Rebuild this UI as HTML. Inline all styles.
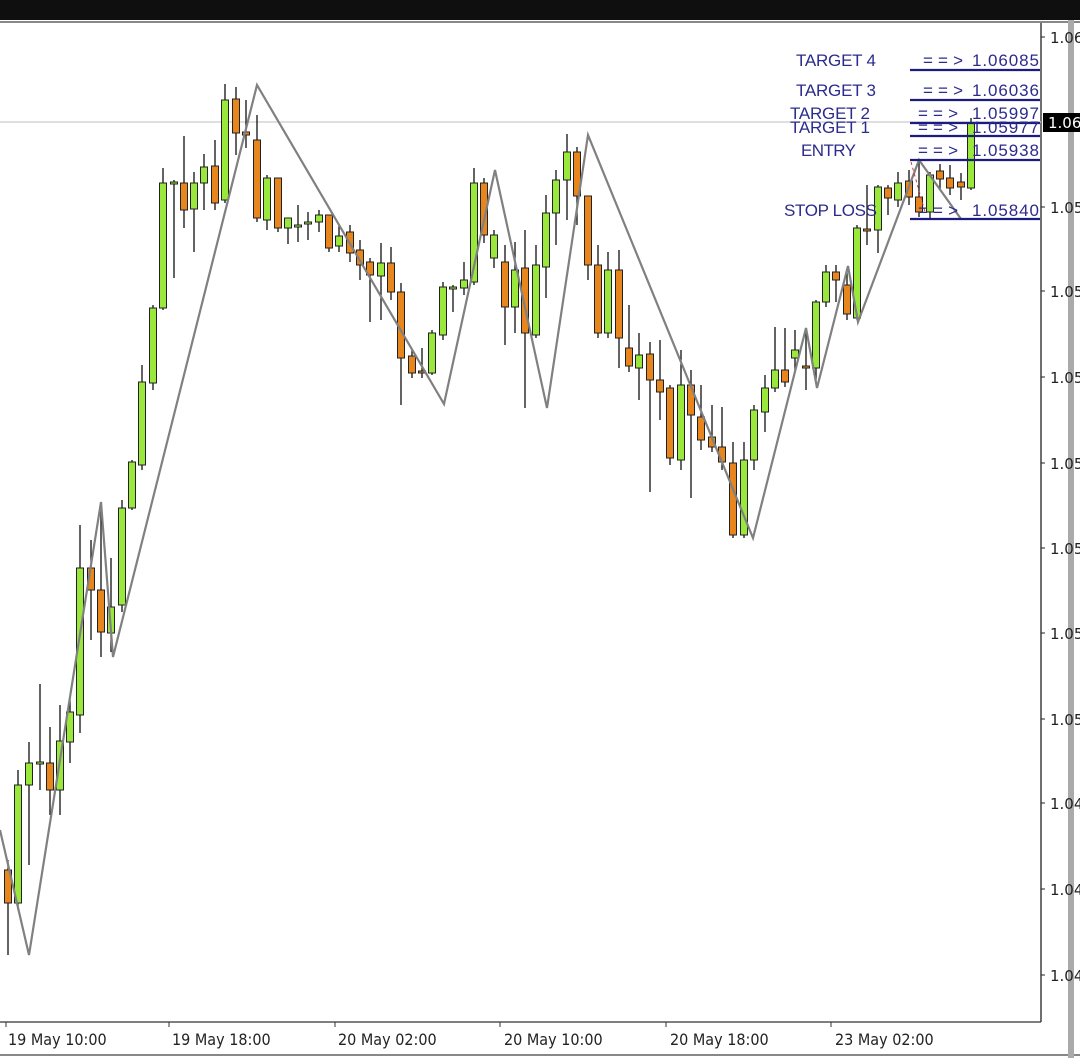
<!DOCTYPE html><html><head><meta charset="utf-8"><style>
html,body{margin:0;padding:0;width:1080px;height:1058px;overflow:hidden;background:#fff}
svg{display:block}
.w{stroke:#111;stroke-width:1.3}
.g{fill:#9be83c;stroke:#222;stroke-width:1}
.o{fill:#e8861e;stroke:#222;stroke-width:1}
.ax{font:15px "DejaVu Sans",sans-serif;fill:#222}
.lb{font:17px "Liberation Sans",sans-serif;fill:#2b2b8e}
.tm{font:16px "DejaVu Sans Condensed","DejaVu Sans",sans-serif;fill:#222}
</style></head><body>
<svg width="1080" height="1058" viewBox="0 0 1080 1058">
<rect x="0" y="0" width="1080" height="20" fill="#0f0f0f"/>
<line x1="0" y1="22" x2="1080" y2="22" stroke="#888" stroke-width="2"/>
<line x1="1041" y1="23" x2="1041" y2="1022" stroke="#222" stroke-width="1.3"/>
<line x1="0" y1="1022" x2="1041" y2="1022" stroke="#333" stroke-width="1.3"/>
<line x1="0" y1="1055" x2="1080" y2="1055" stroke="#888" stroke-width="2"/>
<rect x="1068" y="20" width="6" height="1038" fill="#aaa"/>
<line x1="0" y1="122" x2="1041" y2="122" stroke="#ccc" stroke-width="1.3"/>
<g class="ax">
<text x="1050" y="43">1.06</text><text x="1050" y="213">1.05</text><text x="1050" y="297">1.05</text><text x="1050" y="383">1.05</text><text x="1050" y="469">1.05</text><text x="1050" y="554">1.05</text><text x="1050" y="639">1.05</text><text x="1050" y="725">1.05</text><text x="1050" y="809">1.04</text><text x="1050" y="895">1.04</text><text x="1050" y="981">1.04</text>
</g>
<g stroke="#222"><line x1="1041" y1="37" x2="1045" y2="37"/><line x1="1041" y1="207" x2="1045" y2="207"/><line x1="1041" y1="291" x2="1045" y2="291"/><line x1="1041" y1="377" x2="1045" y2="377"/><line x1="1041" y1="463" x2="1045" y2="463"/><line x1="1041" y1="548" x2="1045" y2="548"/><line x1="1041" y1="633" x2="1045" y2="633"/><line x1="1041" y1="719" x2="1045" y2="719"/><line x1="1041" y1="803" x2="1045" y2="803"/><line x1="1041" y1="889" x2="1045" y2="889"/><line x1="1041" y1="975" x2="1045" y2="975"/></g>
<rect x="1043" y="113" width="37" height="19" fill="#000"/><text x="1048" y="128" class="ax" style="fill:#fff">1.06</text>
<g class="tm"><text x="8" y="1045">19 May 10:00</text><text x="172" y="1045">19 May 18:00</text><text x="338" y="1045">20 May 02:00</text><text x="504" y="1045">20 May 10:00</text><text x="670" y="1045">20 May 18:00</text><text x="835" y="1045">23 May 02:00</text></g>
<g stroke="#333"><line x1="6" y1="1022" x2="6" y2="1027"/><line x1="169" y1="1022" x2="169" y2="1027"/><line x1="335" y1="1022" x2="335" y2="1027"/><line x1="500" y1="1022" x2="500" y2="1027"/><line x1="666" y1="1022" x2="666" y2="1027"/><line x1="831" y1="1022" x2="831" y2="1027"/></g>
<g class="w">
<line x1="8" y1="860" x2="8" y2="955"/><line x1="18" y1="770" x2="18" y2="910"/><line x1="29" y1="742" x2="29" y2="865"/><line x1="40" y1="684" x2="40" y2="790"/><line x1="50" y1="727" x2="50" y2="815"/><line x1="60" y1="705" x2="60" y2="815"/><line x1="70" y1="698" x2="70" y2="763"/><line x1="80" y1="525" x2="80" y2="733"/><line x1="91" y1="540" x2="91" y2="640"/><line x1="101" y1="502" x2="101" y2="657"/><line x1="111" y1="558" x2="111" y2="652"/><line x1="122" y1="500" x2="122" y2="612"/><line x1="132" y1="460" x2="132" y2="510"/><line x1="142" y1="365" x2="142" y2="470"/><line x1="153" y1="305" x2="153" y2="390"/><line x1="163" y1="168" x2="163" y2="310"/><line x1="174" y1="180" x2="174" y2="278"/><line x1="184" y1="136" x2="184" y2="228"/><line x1="194" y1="172" x2="194" y2="252"/><line x1="204" y1="154" x2="204" y2="210"/><line x1="215" y1="140" x2="215" y2="210"/><line x1="225" y1="84" x2="225" y2="203"/><line x1="236" y1="87" x2="236" y2="155"/><line x1="246" y1="100" x2="246" y2="148"/><line x1="257" y1="115" x2="257" y2="222"/><line x1="267" y1="175" x2="267" y2="230"/><line x1="278" y1="178" x2="278" y2="232"/><line x1="288" y1="218" x2="288" y2="244"/><line x1="298" y1="205" x2="298" y2="242"/><line x1="308" y1="212" x2="308" y2="240"/><line x1="319" y1="210" x2="319" y2="232"/><line x1="329" y1="215" x2="329" y2="252"/><line x1="339" y1="225" x2="339" y2="252"/><line x1="350" y1="225" x2="350" y2="262"/><line x1="360" y1="240" x2="360" y2="280"/><line x1="370" y1="258" x2="370" y2="322"/><line x1="381" y1="243" x2="381" y2="320"/><line x1="391" y1="247" x2="391" y2="300"/><line x1="401" y1="283" x2="401" y2="405"/><line x1="412" y1="350" x2="412" y2="378"/><line x1="422" y1="348" x2="422" y2="378"/><line x1="432" y1="330" x2="432" y2="375"/><line x1="443" y1="282" x2="443" y2="340"/><line x1="453" y1="285" x2="453" y2="312"/><line x1="464" y1="262" x2="464" y2="295"/><line x1="474" y1="168" x2="474" y2="285"/><line x1="484" y1="178" x2="484" y2="243"/><line x1="494" y1="230" x2="494" y2="268"/><line x1="505" y1="245" x2="505" y2="345"/><line x1="515" y1="242" x2="515" y2="333"/><line x1="525" y1="230" x2="525" y2="408"/><line x1="536" y1="245" x2="536" y2="338"/><line x1="546" y1="195" x2="546" y2="298"/><line x1="556" y1="170" x2="556" y2="245"/><line x1="567" y1="134" x2="567" y2="220"/><line x1="577" y1="147" x2="577" y2="225"/><line x1="588" y1="196" x2="588" y2="280"/><line x1="598" y1="245" x2="598" y2="338"/><line x1="608" y1="252" x2="608" y2="338"/><line x1="619" y1="250" x2="619" y2="368"/><line x1="629" y1="305" x2="629" y2="372"/><line x1="639" y1="333" x2="639" y2="400"/><line x1="650" y1="342" x2="650" y2="492"/><line x1="660" y1="340" x2="660" y2="420"/><line x1="670" y1="385" x2="670" y2="465"/><line x1="681" y1="350" x2="681" y2="470"/><line x1="691" y1="370" x2="691" y2="498"/><line x1="701" y1="385" x2="701" y2="450"/><line x1="712" y1="405" x2="712" y2="452"/><line x1="722" y1="407" x2="722" y2="470"/><line x1="733" y1="442" x2="733" y2="538"/><line x1="744" y1="442" x2="744" y2="538"/><line x1="754" y1="405" x2="754" y2="470"/><line x1="765" y1="375" x2="765" y2="432"/><line x1="775" y1="327" x2="775" y2="392"/><line x1="785" y1="328" x2="785" y2="387"/><line x1="795" y1="330" x2="795" y2="372"/><line x1="806" y1="328" x2="806" y2="390"/><line x1="816" y1="300" x2="816" y2="380"/><line x1="826" y1="265" x2="826" y2="307"/><line x1="836" y1="265" x2="836" y2="302"/><line x1="847" y1="270" x2="847" y2="320"/><line x1="857" y1="225" x2="857" y2="320"/><line x1="867" y1="185" x2="867" y2="245"/><line x1="878" y1="185" x2="878" y2="253"/><line x1="888" y1="185" x2="888" y2="215"/><line x1="898" y1="172" x2="898" y2="207"/><line x1="909" y1="170" x2="909" y2="205"/><line x1="919" y1="160" x2="919" y2="217"/><line x1="930" y1="172" x2="930" y2="220"/><line x1="940" y1="164" x2="940" y2="190"/><line x1="950" y1="165" x2="950" y2="195"/><line x1="961" y1="173" x2="961" y2="200"/><line x1="971" y1="118" x2="971" y2="190"/>
</g>
<g>
<rect class="o" x="4.5" y="870" width="7" height="33"/><rect class="g" x="14.5" y="785" width="7" height="118"/><rect class="g" x="25.5" y="763" width="7" height="22"/><rect class="g" x="36.5" y="762" width="7" height="2"/><rect class="o" x="46.5" y="763" width="7" height="27"/><rect class="g" x="56.5" y="741" width="7" height="49"/><rect class="g" x="66.5" y="712" width="7" height="30"/><rect class="g" x="76.5" y="568" width="7" height="147"/><rect class="o" x="87.5" y="568" width="7" height="22"/><rect class="o" x="97.5" y="590" width="7" height="42"/><rect class="g" x="107.5" y="607" width="7" height="26"/><rect class="g" x="118.5" y="508" width="7" height="97"/><rect class="g" x="128.5" y="462" width="7" height="46"/><rect class="g" x="138.5" y="382" width="7" height="83"/><rect class="g" x="149.5" y="308" width="7" height="75"/><rect class="g" x="159.5" y="183" width="7" height="125"/><rect class="g" x="170.5" y="182" width="7" height="2"/><rect class="o" x="180.5" y="183" width="7" height="27"/><rect class="g" x="190.5" y="183" width="7" height="26"/><rect class="g" x="200.5" y="167" width="7" height="16"/><rect class="o" x="211.5" y="166" width="7" height="37"/><rect class="g" x="221.5" y="100" width="7" height="100"/><rect class="o" x="232.5" y="99" width="7" height="34"/><rect class="o" x="242.5" y="132" width="7" height="3"/><rect class="o" x="253.5" y="140" width="7" height="78"/><rect class="g" x="263.5" y="178" width="7" height="42"/><rect class="o" x="274.5" y="178" width="7" height="50"/><rect class="g" x="284.5" y="218" width="7" height="10"/><rect class="g" x="294.5" y="225" width="7" height="2"/><rect class="g" x="304.5" y="222" width="7" height="2"/><rect class="g" x="315.5" y="215" width="7" height="7"/><rect class="o" x="325.5" y="215" width="7" height="33"/><rect class="g" x="335.5" y="236" width="7" height="10"/><rect class="o" x="346.5" y="232" width="7" height="21"/><rect class="o" x="356.5" y="250" width="7" height="15"/><rect class="o" x="366.5" y="262" width="7" height="13"/><rect class="g" x="377.5" y="263" width="7" height="13"/><rect class="o" x="387.5" y="263" width="7" height="29"/><rect class="o" x="397.5" y="292" width="7" height="66"/><rect class="o" x="408.5" y="356" width="7" height="17"/><rect class="o" x="418.5" y="371" width="7" height="2"/><rect class="g" x="428.5" y="333" width="7" height="40"/><rect class="g" x="439.5" y="287" width="7" height="48"/><rect class="g" x="449.5" y="287" width="7" height="2"/><rect class="g" x="460.5" y="280" width="7" height="8"/><rect class="g" x="470.5" y="183" width="7" height="99"/><rect class="o" x="480.5" y="183" width="7" height="52"/><rect class="g" x="490.5" y="235" width="7" height="23"/><rect class="o" x="501.5" y="262" width="7" height="45"/><rect class="g" x="511.5" y="270" width="7" height="37"/><rect class="o" x="521.5" y="268" width="7" height="65"/><rect class="g" x="532.5" y="265" width="7" height="70"/><rect class="g" x="542.5" y="213" width="7" height="54"/><rect class="g" x="552.5" y="180" width="7" height="33"/><rect class="g" x="563.5" y="152" width="7" height="28"/><rect class="o" x="573.5" y="152" width="7" height="44"/><rect class="o" x="584.5" y="196" width="7" height="69"/><rect class="o" x="594.5" y="265" width="7" height="68"/><rect class="g" x="604.5" y="270" width="7" height="63"/><rect class="o" x="615.5" y="270" width="7" height="68"/><rect class="o" x="625.5" y="348" width="7" height="18"/><rect class="g" x="635.5" y="355" width="7" height="13"/><rect class="o" x="646.5" y="354" width="7" height="26"/><rect class="o" x="656.5" y="380" width="7" height="12"/><rect class="o" x="666.5" y="388" width="7" height="70"/><rect class="g" x="677.5" y="385" width="7" height="75"/><rect class="o" x="687.5" y="385" width="7" height="30"/><rect class="o" x="697.5" y="417" width="7" height="23"/><rect class="o" x="708.5" y="437" width="7" height="10"/><rect class="o" x="718.5" y="447" width="7" height="15"/><rect class="o" x="729.5" y="463" width="7" height="72"/><rect class="g" x="740.5" y="460" width="7" height="75"/><rect class="g" x="750.5" y="410" width="7" height="50"/><rect class="g" x="761.5" y="388" width="7" height="24"/><rect class="g" x="771.5" y="370" width="7" height="18"/><rect class="o" x="781.5" y="370" width="7" height="12"/><rect class="g" x="791.5" y="350" width="7" height="8"/><rect class="o" x="802.5" y="366" width="7" height="2"/><rect class="g" x="812.5" y="302" width="7" height="66"/><rect class="g" x="822.5" y="272" width="7" height="30"/><rect class="o" x="832.5" y="272" width="7" height="8"/><rect class="o" x="843.5" y="285" width="7" height="29"/><rect class="g" x="853.5" y="228" width="7" height="90"/><rect class="o" x="863.5" y="229" width="7" height="2"/><rect class="g" x="874.5" y="187" width="7" height="43"/><rect class="o" x="884.5" y="188" width="7" height="10"/><rect class="g" x="894.5" y="183" width="7" height="17"/><rect class="o" x="905.5" y="181" width="7" height="16"/><rect class="o" x="915.5" y="197" width="7" height="15"/><rect class="g" x="926.5" y="175" width="7" height="37"/><rect class="o" x="936.5" y="171" width="7" height="8"/><rect class="o" x="946.5" y="178" width="7" height="10"/><rect class="o" x="957.5" y="182" width="7" height="5"/><rect class="g" x="967.5" y="123" width="7" height="65"/>
</g>
<polyline fill="none" stroke="#808080" stroke-width="2.2" points="0,830 29,955 101,502 113,657 257,85 444,404 495,170 547,408 588,135 753,538 806,328 817,388 848,266 858,322 919,160 961,219"/>
<line x1="911" y1="162" x2="925" y2="212" stroke="#d33" stroke-width="1" stroke-dasharray="3,3"/>
<g stroke="#1b1b80" stroke-width="2.2">
<line x1="910" y1="70" x2="1040" y2="70"/><line x1="910" y1="100" x2="1040" y2="100"/><line x1="910" y1="123" x2="1040" y2="123"/><line x1="910" y1="136" x2="1040" y2="136"/><line x1="910" y1="160" x2="1040" y2="160"/><line x1="910" y1="219" x2="1040" y2="219"/>
</g>
<g class="lb">
<text x="796" y="66" textLength="80">TARGET 4</text><text x="923" y="66" textLength="40">==&gt;</text><text x="972" y="66" textLength="67">1.06085</text>
<text x="796" y="96" textLength="80">TARGET 3</text><text x="923" y="96" textLength="40">==&gt;</text><text x="972" y="96" textLength="67">1.06036</text>
<text x="790" y="119" textLength="80">TARGET 2</text><text x="918" y="119" textLength="40">==&gt;</text><text x="972" y="119" textLength="67">1.05997</text>
<text x="790" y="133" textLength="80">TARGET 1</text><text x="918" y="133" textLength="40">==&gt;</text><text x="972" y="133" textLength="67">1.05977</text>
<text x="801" y="156" textLength="55">ENTRY</text><text x="918" y="156" textLength="40">==&gt;</text><text x="972" y="156" textLength="67">1.05938</text>
<text x="784" y="216" textLength="93">STOP LOSS</text><text x="918" y="216" textLength="40">==&gt;</text><text x="972" y="216" textLength="67">1.05840</text>
</g>
</svg>
</body></html>
